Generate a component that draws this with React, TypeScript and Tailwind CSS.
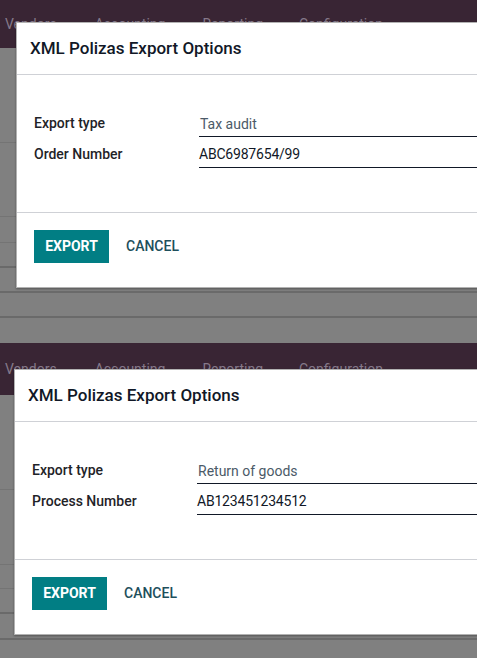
import React from 'react';

type Line = { gap: number; thick?: boolean };

interface PanelProps {
  navHeight: number;
  dialogTop: number;
  dialogLeft: number;
  lines: Line[];
  tail: number;
  typeValue: string;
  numberLabel: string;
  numberValue: string;
}

const menu = [
  { label: 'Vendors', ml: 'ml-[5px]' },
  { label: 'Accounting', ml: 'ml-[38px]' },
  { label: 'Reporting', ml: 'ml-[37px]' },
  { label: 'Configuration', ml: 'ml-[36px]' },
];

const Panel: React.FC<PanelProps> = ({
  navHeight,
  dialogTop,
  dialogLeft,
  lines,
  tail,
  typeValue,
  numberLabel,
  numberValue,
}) => {
  return (
    <div className="relative overflow-hidden bg-[#808080]">
      <div
        className="flex items-center bg-[#392534] text-[14px] text-[#85798a]"
        style={{ height: navHeight }}
      >
        {menu.map(item => (
          <span key={item.label} className={item.ml}>
            {item.label}
          </span>
        ))}
      </div>
      {lines.map((line, i) => (
        <div
          key={i}
          className={line.thick ? 'border-b-2 border-[#6a6a6a]' : 'border-b border-[#747474]'}
          style={{ height: line.gap + (line.thick ? 2 : 1) }}
        />
      ))}
      <div style={{ height: tail }} />

      {/* modal */}
      <div
        className="absolute h-[266px] w-[560px] bg-white border border-black/30 shadow-[0_1px_2px_rgba(0,0,0,0.35)] flex flex-col"
        style={{ top: dialogTop, left: dialogLeft }}
      >
        <div className="h-[52px] flex items-center pl-[13px] border-b border-[#cfd1d6]">
          <h4 className="text-[17px] font-medium text-[#111827]">XML Polizas Export Options</h4>
        </div>
        <div className="h-[138px] pt-[31px] pl-[17px] border-b border-[#cfd1d6]">
          <div className="flex h-[31px]">
            <label className="w-[165px] pt-[7px] leading-[20px] text-[14px] font-medium text-[#1f2328]">
              Export type
            </label>
            <div className="flex-1 border-b border-[#111827] pt-[8px] pl-[1px] leading-[20px] text-[14px] text-[#4b5a68]">
              {typeValue}
            </div>
          </div>
          <div className="flex h-[31px]">
            <label className="w-[165px] pt-[7px] leading-[20px] text-[14px] font-medium text-[#1f2328]">
              {numberLabel}
            </label>
            <div className="flex-1 border-b border-[#111827] pt-[7px] leading-[20px] text-[14px] tracking-[-0.2px] text-[#111827]">
              {numberValue}
            </div>
          </div>
        </div>
        <div className="flex items-start pt-[17px] pl-[17px] gap-[4px]">
          <button className="h-[33px] w-[75px] bg-[#017e84] text-white text-[14px] font-bold">
            EXPORT
          </button>
          <button className="h-[33px] px-[13px] text-[14px] font-medium text-[#1e4f5c]">
            CANCEL
          </button>
        </div>
      </div>
    </div>
  );
};

export default function App() {
  return (
    <div className="w-[477px] h-[658px] overflow-hidden" style={{ fontFamily: 'Roboto, "Liberation Sans", sans-serif' }}>
      <Panel
        navHeight={48}
        dialogTop={22}
        dialogLeft={16}
        lines={[
          { gap: 94 },
          { gap: 73 },
          { gap: 25 },
          { gap: 23, thick: true },
          { gap: 23, thick: true },
          { gap: 23, thick: true },
        ]}
        tail={25}
        typeValue="Tax audit"
        numberLabel="Order Number"
        numberValue="ABC6987654/99"
      />
      <Panel
        navHeight={52}
        dialogTop={26}
        dialogLeft={14}
        lines={[
          { gap: 94 },
          { gap: 74 },
          { gap: 23 },
          { gap: 23, thick: true },
          { gap: 24, thick: true },
        ]}
        tail={30}
        typeValue="Return of goods"
        numberLabel="Process Number"
        numberValue="AB123451234512"
      />
    </div>
  );
}
